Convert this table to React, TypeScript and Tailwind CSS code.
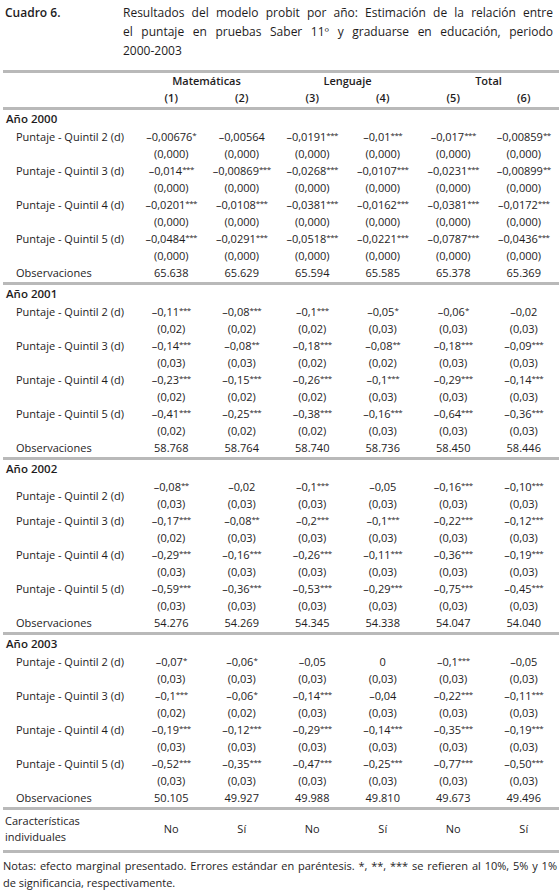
import React from "react";

type Row = { label: string; c: string[]; s: string[]; center?: boolean };
type Section = { year: string; rows: Row[]; obs: string[] };

const z = (v: string) => [v, v, v, v, v, v];

const sections: Section[] = [
  {
    year: "Año 2000",
    rows: [
      { label: "Puntaje - Quintil 2 (d)", c: ["–0,00676*", "–0,00564", "–0,0191***", "–0,01***", "–0,017***", "–0,00859**"], s: z("(0,000)") },
      { label: "Puntaje - Quintil 3 (d)", c: ["–0,014***", "–0,00869***", "–0,0268***", "–0,0107***", "–0,0231***", "–0,00899**"], s: z("(0,000)") },
      { label: "Puntaje - Quintil 4 (d)", c: ["–0,0201***", "–0,0108***", "–0,0381***", "–0,0162***", "–0,0381***", "–0,0172***"], s: z("(0,000)") },
      { label: "Puntaje - Quintil 5 (d)", c: ["–0,0484***", "–0,0291***", "–0,0518***", "–0,0221***", "–0,0787***", "–0,0436***"], s: z("(0,000)") },
    ],
    obs: ["65.638", "65.629", "65.594", "65.585", "65.378", "65.369"],
  },
  {
    year: "Año 2001",
    rows: [
      { label: "Puntaje - Quintil 2 (d)", c: ["–0,11***", "–0,08***", "–0,1***", "–0,05*", "–0,06*", "–0,02"], s: ["(0,02)", "(0,02)", "(0,02)", "(0,03)", "(0,03)", "(0,03)"] },
      { label: "Puntaje - Quintil 3 (d)", c: ["–0,14***", "–0,08**", "–0,18***", "–0,08**", "–0,18***", "–0,09***"], s: ["(0,03)", "(0,03)", "(0,02)", "(0,02)", "(0,03)", "(0,03)"] },
      { label: "Puntaje - Quintil 4 (d)", c: ["–0,23***", "–0,15***", "–0,26***", "–0,1***", "–0,29***", "–0,14***"], s: ["(0,02)", "(0,02)", "(0,02)", "(0,03)", "(0,03)", "(0,03)"] },
      { label: "Puntaje - Quintil 5 (d)", c: ["–0,41***", "–0,25***", "–0,38***", "–0,16***", "–0,64***", "–0,36***"], s: ["(0,02)", "(0,02)", "(0,02)", "(0,03)", "(0,03)", "(0,03)"] },
    ],
    obs: ["58.768", "58.764", "58.740", "58.736", "58.450", "58.446"],
  },
  {
    year: "Año 2002",
    rows: [
      { label: "Puntaje - Quintil 2 (d)", c: ["–0,08**", "–0,02", "–0,1***", "–0,05", "–0,16***", "–0,10***"], s: z("(0,03)"), center: true },
      { label: "Puntaje - Quintil 3 (d)", c: ["–0,17***", "–0,08**", "–0,2***", "–0,1***", "–0,22***", "–0,12***"], s: ["(0,02)", "(0,03)", "(0,03)", "(0,03)", "(0,03)", "(0,03)"] },
      { label: "Puntaje - Quintil 4 (d)", c: ["–0,29***", "–0,16***", "–0,26***", "–0,11***", "–0,36***", "–0,19***"], s: z("(0,03)") },
      { label: "Puntaje - Quintil 5 (d)", c: ["–0,59***", "–0,36***", "–0,53***", "–0,29***", "–0,75***", "–0,45***"], s: z("(0,03)") },
    ],
    obs: ["54.276", "54.269", "54.345", "54.338", "54.047", "54.040"],
  },
  {
    year: "Año 2003",
    rows: [
      { label: "Puntaje - Quintil 2 (d)", c: ["–0,07*", "–0,06*", "–0,05", "0", "–0,1***", "–0,05"], s: z("(0,03)") },
      { label: "Puntaje - Quintil 3 (d)", c: ["–0,1***", "–0,06*", "–0,14***", "–0,04", "–0,22***", "–0,11***"], s: ["(0,02)", "(0,02)", "(0,03)", "(0,03)", "(0,03)", "(0,03)"] },
      { label: "Puntaje - Quintil 4 (d)", c: ["–0,19***", "–0,12***", "–0,29***", "–0,14***", "–0,35***", "–0,19***"], s: z("(0,03)") },
      { label: "Puntaje - Quintil 5 (d)", c: ["–0,52***", "–0,35***", "–0,47***", "–0,25***", "–0,77***", "–0,50***"], s: z("(0,03)") },
    ],
    obs: ["50.105", "49.927", "49.988", "49.810", "49.673", "49.496"],
  },
];

function Val({ v }: { v: string }) {
  const m = v.match(/^(.*?)(\**)$/);
  const num = m ? m[1] : v;
  const stars = m ? m[2] : "";
  return (
    <span>
      {num}
      {stars && <sup className="text-[8px] top-[-3px] tracking-[-0.5px]">{stars}</sup>}
    </span>
  );
}

const Rule = () => <div className="h-[3px] bg-[#b9b9b9]" />;

const gridCls = "grid grid-cols-[133px_repeat(6,minmax(0,1fr))] auto-rows-[17px] items-center";

function SectionBlock({ sec }: { sec: Section }) {
  return (
    <div>
      <div className="h-[19px] leading-[17px] pl-[3px] text-[11.5px] font-semibold">{sec.year}</div>
      <div className={gridCls}>
        {sec.rows.map((r, i) => (
          <React.Fragment key={i}>
            <div className={"pl-[13px] text-[11px] " + (r.center ? "row-span-2" : "")}>{r.label}</div>
            {r.c.map((v, j) => (
              <div key={"c" + j} className="text-center">
                <Val v={v} />
              </div>
            ))}
            {!r.center && <div />}
            {r.s.map((v, j) => (
              <div key={"s" + j} className="text-center">
                {v}
              </div>
            ))}
          </React.Fragment>
        ))}
        <div className="pl-[13px] text-[11px]">Observaciones</div>
        {sec.obs.map((v, j) => (
          <div key={"o" + j} className="text-center">
            {v}
          </div>
        ))}
      </div>
    </div>
  );
}

export default function App() {
  return (
    <div
      className="w-[559px] h-[891px] bg-white text-[#1e1c1d] text-[11px] overflow-hidden"
      style={{ fontFamily: '"Open Sans", "Noto Sans", sans-serif' }}
    >
      <div className="flex pt-[3px] leading-[19px] text-[12px]">
        <div className="w-[123px] pl-[5px] font-semibold">Cuadro 6.</div>
        <div className="w-[430px] text-justify">
          <div className="[text-align-last:justify]">Resultados del modelo probit por año: Estimación de la relación entre</div>
          <div className="[text-align-last:justify]">el puntaje en pruebas Saber 11º y graduarse en educación, periodo</div>
          <div>2000-2003</div>
        </div>
      </div>

      <div className="pl-[3px] mt-[10px]">
        <Rule />
        <div className="grid grid-cols-[133px_repeat(6,minmax(0,1fr))] font-semibold text-[11px]">
          <div className="h-[16px]" />
          <div className="col-span-2 text-center leading-[16px]">Matemáticas</div>
          <div className="col-span-2 text-center leading-[16px]">Lenguaje</div>
          <div className="col-span-2 text-center leading-[16px]">Total</div>
          <div className="h-[18px]" />
          {["(1)", "(2)", "(3)", "(4)", "(5)", "(6)"].map((h) => (
            <div key={h} className="text-center leading-[18px]">
              {h}
            </div>
          ))}
        </div>
        <Rule />
        {sections.map((sec, i) => (
          <React.Fragment key={i}>
            <SectionBlock sec={sec} />
            <Rule />
          </React.Fragment>
        ))}
        <div className="grid grid-cols-[133px_repeat(6,minmax(0,1fr))] items-center pt-[3px] pb-[5px]">
          <div className="pl-[2px] leading-[16px]">
            Características
            <br />
            individuales
          </div>
          {["No", "Sí", "No", "Sí", "No", "Sí"].map((v, j) => (
            <div key={j} className="text-center">
              {v}
            </div>
          ))}
        </div>
        <Rule />
      </div>

      <div className="pl-[3px] pr-[2px] mt-[4px] leading-[17px] text-[11px]">
        <div className="text-justify [text-align-last:justify]">
          Notas: efecto marginal presentado. Errores estándar en paréntesis. *, **, *** se refieren al 10%, 5% y 1%
        </div>
        <div>de significancia, respectivamente.</div>
      </div>
    </div>
  );
}
